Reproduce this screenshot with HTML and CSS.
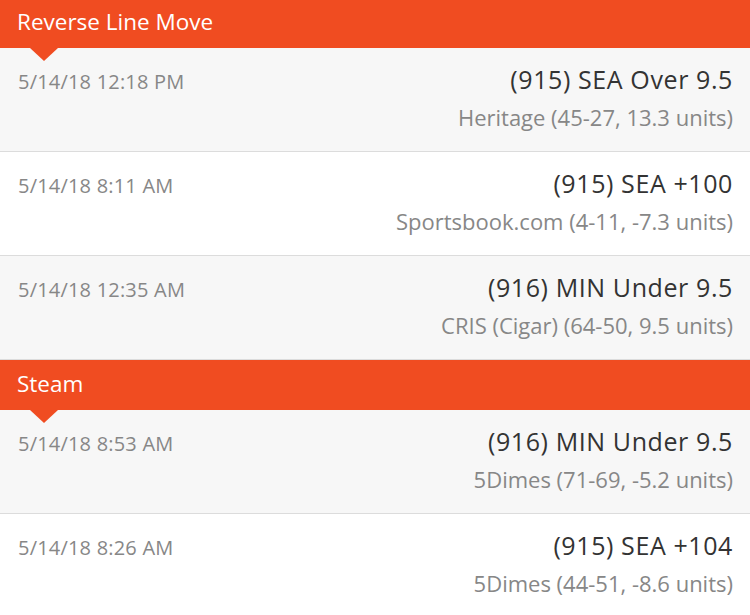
FILE: index.html
```html
<!DOCTYPE html>
<html lang="en">
<head>
    <meta charset="UTF-8">
    <meta name="viewport" content="width=device-width, initial-scale=1.0">
    <title>Line Moves</title>
    <link rel="stylesheet" href="styles.css">
</head>
<body>
    <div class="feed">
        <div class="section">
            <div class="section-head">Reverse Line Move</div>
            <div class="row shade">
                <div class="when">5/14/18 12:18 PM</div>
                <div class="pick">
                    <div class="bet">(915) SEA Over 9.5</div>
                    <div class="source">Heritage (45-27, 13.3 units)</div>
                </div>
            </div>
            <div class="row">
                <div class="when">5/14/18 8:11 AM</div>
                <div class="pick">
                    <div class="bet">(915) SEA +100</div>
                    <div class="source">Sportsbook.com (4-11, -7.3 units)</div>
                </div>
            </div>
            <div class="row shade">
                <div class="when">5/14/18 12:35 AM</div>
                <div class="pick">
                    <div class="bet">(916) MIN Under 9.5</div>
                    <div class="source">CRIS (Cigar) (64-50, 9.5 units)</div>
                </div>
            </div>
        </div>
        <div class="section">
            <div class="section-head">Steam</div>
            <div class="row shade">
                <div class="when">5/14/18 8:53 AM</div>
                <div class="pick">
                    <div class="bet">(916) MIN Under 9.5</div>
                    <div class="source">5Dimes (71-69, -5.2 units)</div>
                </div>
            </div>
            <div class="row">
                <div class="when">5/14/18 8:26 AM</div>
                <div class="pick">
                    <div class="bet">(915) SEA +104</div>
                    <div class="source">5Dimes (44-51, -8.6 units)</div>
                </div>
            </div>
        </div>
    </div>
</body>
</html>
```

FILE: styles.css
```css
body {
    font-family: "Open Sans", sans-serif;
    background-color: #fff;
    margin: 0;
    padding: 0;
    overflow: hidden;
}
.feed {
    margin-top: -2px;
}
.section-head {
    position: relative;
    background: #f04c21;
    color: #fff;
    font-size: 22.5px;
    height: 50px;
    line-height: 47px;
    padding-left: 17px;
}
/* little pointer under the section title */
.section-head::after {
    content: "";
    position: absolute;
    left: 30px;
    bottom: -13px;
    border-left: 14px solid transparent;
    border-right: 14px solid transparent;
    border-top: 13px solid #f04c21;
}
.row {
    display: flex;
    justify-content: space-between;
    align-items: baseline;
    height: 104px;
    box-sizing: border-box;
    padding: 16px 17px 0 18px;
    border-bottom: 1px solid #dcdcdc;
    background: #fff;
}
.row.shade {
    background: #f7f7f7;
}
.when {
    color: #878787;
    font-size: 20px;
    letter-spacing: 0.2px;
}
.pick {
    text-align: right;
}
.bet {
    color: #333;
    font-size: 25px;
    line-height: 30px;
    letter-spacing: 0.6px;
}
.source {
    color: #878787;
    font-size: 22px;
    line-height: 30px;
    margin-top: 8px;
}
```
